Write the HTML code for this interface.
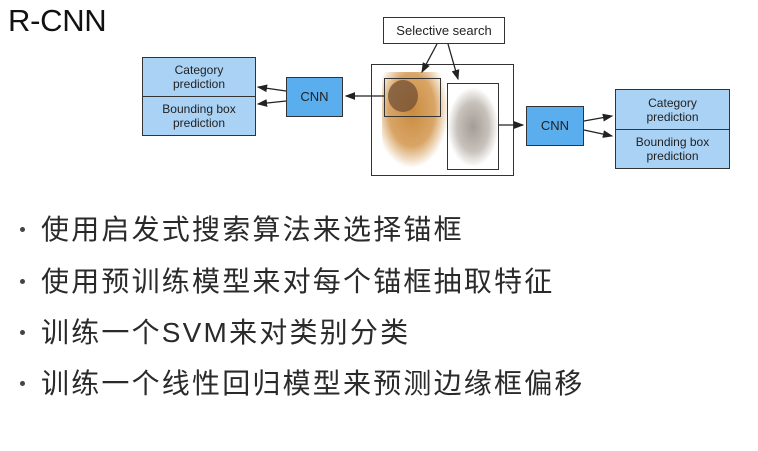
<!DOCTYPE html>
<html><head><meta charset="utf-8"><style>
body{margin:0;width:758px;height:451px;background:#fff;position:relative;overflow:hidden;font-family:"Liberation Sans",sans-serif}
.a{position:absolute;box-sizing:border-box}
.t{left:8px;top:3px;font-size:31px;color:#111;letter-spacing:-0.3px}
.b{border:1.5px solid #333;font-size:12px;color:#222;text-align:center;line-height:14px;display:flex;align-items:center;justify-content:center}
.pred{background:#a9d2f5}
.cnn{background:#5aaeee;font-size:13px}
.li{left:20px;font-family:"Liberation Sans","Noto Sans CJK SC",sans-serif;font-size:28px;color:#2a2a2a;letter-spacing:2.2px;font-weight:400}
.li:before{content:"";display:inline-block;width:5px;height:5px;border-radius:50%;background:#444;vertical-align:middle;margin-right:16px;position:relative;top:-2px}
</style></head><body>
<div class="a t">R-CNN</div>
<div class="a b pred" style="left:142px;top:57px;width:114px;height:40px">Category<br>prediction</div>
<div class="a b pred" style="left:142px;top:96px;width:114px;height:40px">Bounding box<br>prediction</div>
<div class="a b cnn" style="left:286px;top:77px;width:57px;height:40px">CNN</div>
<div class="a b" style="left:383px;top:17px;width:122px;height:27px;font-size:13px">Selective search</div>
<div class="a" style="left:371px;top:64px;width:143px;height:112px;border:1.5px solid #333"></div>
<div class="a" style="left:382px;top:72px;width:66px;height:95px;background:radial-gradient(ellipse at 45% 40%,#c98b3e 0%,#d9a566 45%,rgba(255,255,255,0) 72%)"></div>
<div class="a" style="left:388px;top:80px;width:30px;height:32px;border-radius:50%;background:#6b4a33;opacity:.7"></div>
<div class="a" style="left:448px;top:88px;width:50px;height:78px;background:radial-gradient(ellipse at 50% 50%,#a49c95 0%,#c8c2bc 45%,rgba(255,255,255,0) 72%)"></div>
<div class="a" style="left:384px;top:78px;width:57px;height:39px;border:1.5px solid #333"></div>
<div class="a" style="left:447px;top:83px;width:52px;height:87px;border:1.5px solid #333"></div>
<div class="a b cnn" style="left:526px;top:106px;width:58px;height:40px">CNN</div>
<div class="a b pred" style="left:615px;top:89px;width:115px;height:41px">Category<br>prediction</div>
<div class="a b pred" style="left:615px;top:129px;width:115px;height:40px">Bounding box<br>prediction</div>
<svg class="a" style="left:0;top:0" width="758" height="200"><defs><marker id="m" markerWidth="8" markerHeight="8" refX="7" refY="4" orient="auto"><path d="M0,1 L8,4 L0,7z" fill="#222"/></marker></defs>
<g stroke="#222" stroke-width="1.3" fill="none" marker-end="url(#m)">
<line x1="437" y1="44" x2="422" y2="72"/><line x1="448" y1="44" x2="458" y2="79"/>
<line x1="384" y1="96" x2="346" y2="96"/>
<line x1="286" y1="91" x2="258" y2="87"/><line x1="286" y1="101" x2="258" y2="104"/>
<line x1="499" y1="125" x2="523" y2="125"/>
<line x1="584" y1="121" x2="612" y2="116"/><line x1="584" y1="130" x2="612" y2="136"/>
</g></svg>
<div class="a li" style="top:208px">使用启发式搜索算法来选择锚框</div>
<div class="a li" style="top:260px">使用预训练模型来对每个锚框抽取特征</div>
<div class="a li" style="top:311px">训练一个SVM来对类别分类</div>
<div class="a li" style="top:362px">训练一个线性回归模型来预测边缘框偏移</div>
</body></html>
